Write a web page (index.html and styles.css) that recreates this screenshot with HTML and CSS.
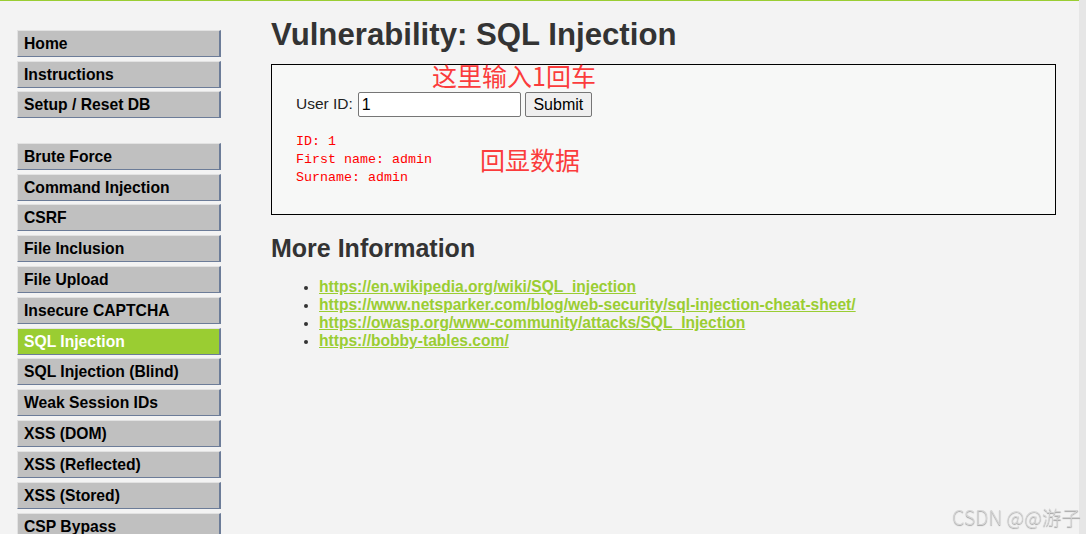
FILE: index.html
```html
<!DOCTYPE html>
<html lang="en">
<head>
<meta charset="utf-8">
<title>Vulnerability: SQL Injection</title>
<link rel="stylesheet" href="styles.css">
</head>
<body>
<div class="page">
  <div class="container">
    <nav class="menu">
      <ul class="menu-group first">
        <li><a class="menu-item" href="#">Home</a></li>
        <li><a class="menu-item" href="#">Instructions</a></li>
        <li><a class="menu-item" href="#">Setup / Reset DB</a></li>
      </ul>
      <ul class="menu-group second">
        <li><a class="menu-item" href="#">Brute Force</a></li>
        <li><a class="menu-item" href="#">Command Injection</a></li>
        <li><a class="menu-item" href="#">CSRF</a></li>
        <li><a class="menu-item" href="#">File Inclusion</a></li>
        <li><a class="menu-item" href="#">File Upload</a></li>
        <li><a class="menu-item" href="#">Insecure CAPTCHA</a></li>
        <li><a class="menu-item active" href="#">SQL Injection</a></li>
        <li><a class="menu-item" href="#">SQL Injection (Blind)</a></li>
        <li><a class="menu-item" href="#">Weak Session IDs</a></li>
        <li><a class="menu-item" href="#">XSS (DOM)</a></li>
        <li><a class="menu-item" href="#">XSS (Reflected)</a></li>
        <li><a class="menu-item" href="#">XSS (Stored)</a></li>
        <li><a class="menu-item" href="#">CSP Bypass</a></li>
      </ul>
    </nav>
    <main class="body">
      <h1 class="title">Vulnerability: SQL Injection</h1>
      <div class="vuln-box">
        <form class="form-row">
          <label class="label" for="uid">User ID:</label>
          <input id="uid" class="text-input" type="text" value="1">
          <button class="submit" type="button">Submit</button>
        </form>
        <pre class="result">ID: 1
First name: admin
Surname: admin</pre>
        <span class="note note-input">这里输入1回车</span>
        <span class="note note-echo">回显数据</span>
      </div>
      <h2 class="subtitle">More Information</h2>
      <ul class="links">
        <li><a href="#">https://en.wikipedia.org/wiki/SQL_injection</a></li>
        <li><a href="#">https://www.netsparker.com/blog/web-security/sql-injection-cheat-sheet/</a></li>
        <li><a href="#">https://owasp.org/www-community/attacks/SQL_Injection</a></li>
        <li><a href="#">https://bobby-tables.com/</a></li>
      </ul>
    </main>
  </div>
  <div class="scroll-strip"></div>
</div>
<div class="watermark">CSDN @@游子</div>
</body>
</html>
```
FILE: styles.css
```css
html, body {
  margin: 0;
  padding: 0;
  height: 100%;
  overflow: hidden;
}
body {
  background: #f3f3f3;
  font-family: "Liberation Sans", Arial, sans-serif;
  color: #000;
}
.page {
  display: flex;
  height: 534px;
}
.container {
  flex: 1;
  display: flex;
  gap: 50px;
  padding-left: 17px;
  border-top: 1px solid #9acd32;
  background: #f3f3f3;
}
.scroll-strip {
  width: 7px;
  background: #e6e6e6;
}
.menu {
  width: 204px;
  padding-top: 29px;
}
.menu-group {
  list-style: none;
  margin: 0;
  padding: 0;
}
.menu-group.first {
  margin-bottom: 24.5px;
}
.menu-group.first li {
  margin-bottom: 3.6px;
}
.menu-group.second li {
  margin-bottom: 3.83px;
}
.menu-item {
  display: block;
  height: 27px;
  box-sizing: border-box;
  padding: 3px 6px;
  line-height: 19px;
  font-size: 15.7px;
  font-weight: bold;
  color: #000;
  text-decoration: none;
  background: #c0c0c0;
  border-top: 1px solid #e2e2e2;
  border-left: 1px solid #e2e2e2;
  border-right: 2px solid #6c7c98;
  border-bottom: 1px solid #6c7c98;
}
.menu-item.active {
  background: #9acd32;
  color: #fff;
}
.body {
  width: 785px;
}
.title {
  margin: 16px 0 0 0;
  font-size: 31.2px;
  line-height: 36px;
  font-weight: bold;
  color: #333;
}
.vuln-box {
  position: relative;
  margin-top: 11px;
  height: 151px;
  box-sizing: border-box;
  border: 1px solid #000;
  background: #f7f8f7;
  padding: 27px 24px 0 24px;
}
.form-row {
  display: flex;
  align-items: center;
  gap: 4px;
  margin: 0;
  height: 25px;
}
.label {
  font-size: 15.5px;
  color: #222;
  margin-right: 1px;
  position: relative;
  top: -1px;
}
.text-input {
  width: 163px;
  height: 25px;
  box-sizing: border-box;
  margin: 0;
  padding: 1px 3px;
  font-family: "Liberation Sans", Arial, sans-serif;
  font-size: 16px;
  color: #000;
  background: #fff;
  border: 1px solid #767676;
  border-radius: 2px;
}
.submit {
  width: 67px;
  height: 25px;
  box-sizing: border-box;
  margin: 0;
  padding: 0;
  font-family: "Liberation Sans", Arial, sans-serif;
  font-size: 16px;
  color: #000;
  background: #efefef;
  border: 1px solid #767676;
  border-radius: 2px;
}
.result {
  margin: 16px 0 0 0;
  font-family: "Liberation Mono", "Courier New", monospace;
  font-size: 13.33px;
  line-height: 17.9px;
  color: #f00;
}
.note {
  position: absolute;
  font-family: "Noto Sans CJK SC", "Liberation Sans", sans-serif;
  font-size: 25px;
  line-height: 25px;
  color: #fb3c3c;
  white-space: nowrap;
}
.note-input {
  top: -2px;
  left: 160px;
}
.note-echo {
  top: 82px;
  left: 208px;
}
.subtitle {
  margin: 19px 0 0 0;
  font-size: 25px;
  line-height: 29px;
  font-weight: bold;
  color: #333;
}
.links {
  margin: 15px 0 0 0;
  padding-left: 48px;
  font-size: 15.6px;
  line-height: 18px;
  font-weight: bold;
  color: #333;
}
.links li::marker {
  font-size: 13px;
}
.links a {
  color: #9acd32;
  text-decoration: underline;
}
.watermark {
  position: fixed;
  right: 5px;
  bottom: 6px;
  font-family: "Noto Sans CJK SC", "Liberation Sans", sans-serif;
  font-size: 19.5px;
  line-height: 22px;
  font-weight: 300;
  color: #d4d4d4;
  text-shadow: 0 1px 1px #a0a0a0;
}
```
